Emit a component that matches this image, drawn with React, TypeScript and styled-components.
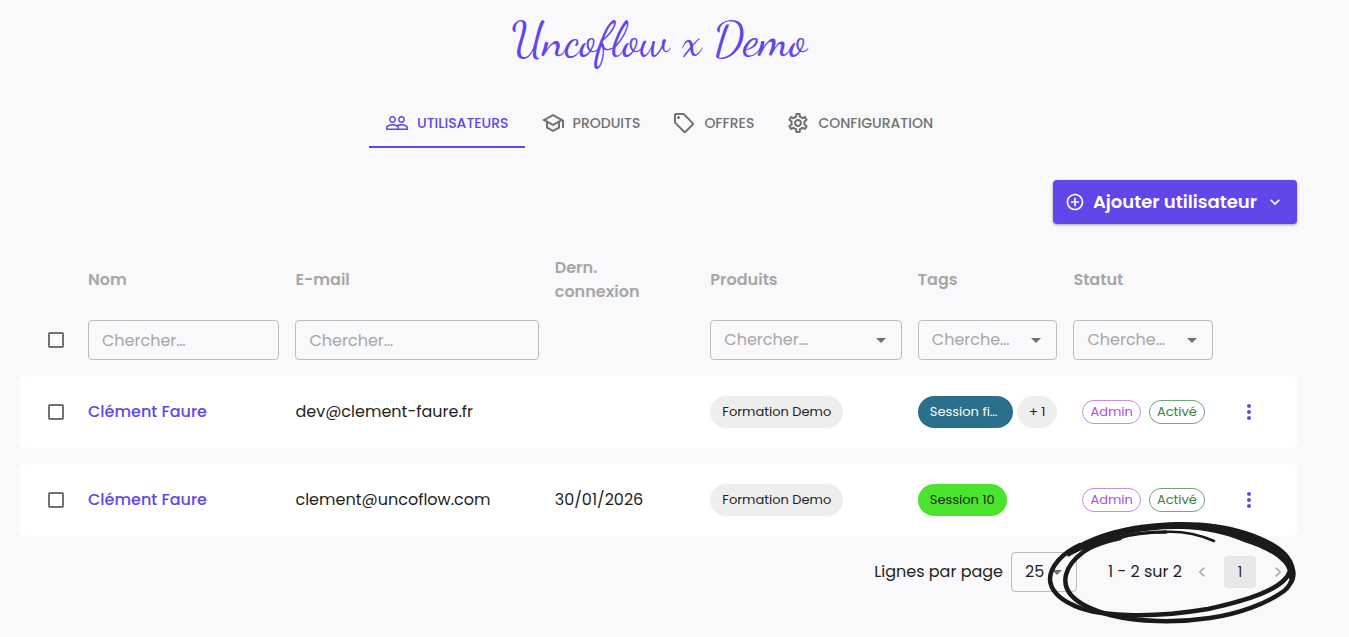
import React from 'react';
import styled, { createGlobalStyle } from 'styled-components';
import {
  MdAddCircleOutline,
  MdArrowDropDown,
  MdChevronLeft,
  MdChevronRight,
  MdKeyboardArrowDown,
  MdMoreVert,
  MdOutlineSchool,
  MdOutlineSell,
  MdOutlineSettings,
  MdPeopleOutline,
} from 'react-icons/md';

const colors = {
  primary: '#6246ea',
  page: '#f9f9fb',
  text: '#1f1f21',
  muted: '#717173',
  faint: '#a6a6a8',
  line: '#bdbdc0',
};

const GlobalStyle = createGlobalStyle`
  *, *::before, *::after { box-sizing: border-box; }
  body {
    margin: 0;
    background: ${colors.page};
    color: ${colors.text};
    font-family: Poppins, Inter, "Liberation Sans", sans-serif;
    font-size: 16px;
    line-height: 24px;
  }
  button, input, select { font: inherit; color: inherit; }
  button { cursor: pointer; }
`;

const Page = styled.main`
  min-height: 100vh;
  padding: 0 51px 24px 20px;
`;

const Brand = styled.h1`
  margin: 0;
  padding: 12px 0 32px;
  text-align: center;
  color: ${colors.primary};
  font-family: "Dancing Script", "Liberation Serif", cursive;
  font-weight: 400;
  font-size: 47px;
  line-height: 56px;
`;

const Tabs = styled.nav`
  display: flex;
  justify-content: center;
`;

const Tab = styled.a<{ $active?: boolean }>`
  display: flex;
  align-items: center;
  gap: 8px;
  height: 48px;
  padding: 0 16px;
  border-bottom: 2px solid ${(p) => (p.$active ? colors.primary : 'transparent')};
  color: ${(p) => (p.$active ? colors.primary : colors.muted)};
  font-size: 14px;
  font-weight: 500;
  text-decoration: none;
  text-transform: uppercase;
`;

const Toolbar = styled.div`
  display: flex;
  justify-content: flex-end;
  padding: 32px 1px 24px 0;
`;

const AddButton = styled.button`
  display: flex;
  align-items: center;
  gap: 8px;
  height: 44px;
  padding: 0 12px;
  border: 0;
  border-radius: 4px;
  background: ${colors.primary};
  color: #fff;
  font-size: 18px;
  font-weight: 600;
  box-shadow: 0 1px 3px rgba(0, 0, 0, 0.35);
`;

const Table = styled.table`
  display: block;
`;

const Head = styled.thead`
  display: block;
`;

const Body = styled.tbody`
  display: flex;
  flex-direction: column;
  gap: 16px;
`;

const Row = styled.tr<{ $card?: boolean; $filters?: boolean }>`
  display: grid;
  grid-template-columns:
    60px minmax(0, 4fr) minmax(0, 5fr) minmax(0, 3fr) minmax(0, 4fr)
    minmax(0, 3fr) minmax(0, 3fr) 77px;
  align-items: center;
  min-height: ${(p) => (p.$card ? '72px' : '64px')};
  padding-bottom: ${(p) => (p.$filters ? '8px' : '0')};
  border-radius: 6px;
  background: ${(p) => (p.$card ? '#fff' : 'transparent')};
`;

const HeadCell = styled.th`
  padding: 0 32px 0 8px;
  text-align: left;
  color: ${colors.faint};
  font-weight: 600;
`;

const Cell = styled.td<{ $wide?: boolean }>`
  display: flex;
  align-items: center;
  gap: ${(p) => (p.$wide ? '8px' : '4px')};
  padding: 0 ${(p) => (p.$wide ? '17px' : '8px')};
  white-space: nowrap;
`;

const CheckCell = styled.td`
  display: flex;
  padding: 0 16px 0 28px;
`;

const Checkbox = styled.input`
  appearance: none;
  width: 16px;
  height: 16px;
  margin: 0;
  border: 2px solid ${colors.muted};
  border-radius: 2px;
  &:checked { background: ${colors.primary}; border-color: ${colors.primary}; }
`;

const SearchInput = styled.input`
  width: 100%;
  height: 40px;
  padding: 0 13px;
  border: 1px solid ${colors.line};
  border-radius: 4px;
  background: transparent;
  &::placeholder { color: ${colors.faint}; opacity: 1; }
`;

const SelectBox = styled.span<{ $compact?: boolean }>`
  display: grid;
  align-items: center;
  width: ${(p) => (p.$compact ? '66px' : '100%')};
  & > * { grid-area: 1 / 1; }
  & > svg {
    justify-self: end;
    margin-right: ${(p) => (p.$compact ? '8px' : '9px')};
    color: ${colors.muted};
    pointer-events: none;
  }
`;

const SelectField = styled.select<{ $filled?: boolean }>`
  appearance: none;
  width: 100%;
  height: 40px;
  padding: 0 28px 0 13px;
  border: 1px solid ${colors.line};
  border-radius: 4px;
  background: transparent;
  color: ${(p) => (p.$filled ? colors.text : colors.faint)};
`;

const UserLink = styled.a`
  color: ${colors.primary};
  font-weight: 500;
  text-decoration: none;
`;

const Chip = styled.span<{ $bg?: string; $fg?: string; $fill?: boolean }>`
  flex: ${(p) => (p.$fill ? '1 1 0' : '0 0 auto')};
  min-width: 40px;
  padding: 0 12px;
  border-radius: 16px;
  background: ${(p) => p.$bg ?? '#eeeeee'};
  color: ${(p) => p.$fg ?? colors.text};
  font-size: 13px;
  line-height: 32px;
`;

const Badge = styled.span<{ $fg: string; $line: string }>`
  padding: 0 7px;
  border: 1px solid ${(p) => p.$line};
  border-radius: 12px;
  color: ${(p) => p.$fg};
  font-size: 13px;
  line-height: 22px;
`;

const IconButton = styled.button<{ $size: number; $fg: string; $current?: boolean }>`
  display: flex;
  align-items: center;
  justify-content: center;
  width: ${(p) => p.$size}px;
  height: ${(p) => p.$size}px;
  padding: 0;
  border: 0;
  border-radius: 4px;
  background: ${(p) => (p.$current ? '#e8e8e8' : 'transparent')};
  color: ${(p) => p.$fg};
  font-size: 14px;
`;

const Footer = styled.footer`
  position: relative;
  display: flex;
  align-items: center;
  justify-content: flex-end;
  gap: 8px;
  padding: 16px 4px 0 0;
`;

const Range = styled.span`
  padding-left: 23px;
`;

const Pager = styled.nav`
  display: flex;
  gap: 6px;
  margin-left: -4px;
`;

const Scribble = styled.svg`
  position: absolute;
  top: -16px;
  right: 0;
  pointer-events: none;
`;

interface Tag { label: string; bg?: string; fg?: string }
interface User { id: number; name: string; email: string; last: string; tags: Tag[] }

const users: User[] = [
  {
    id: 1,
    name: 'Clément Faure',
    email: 'dev@clement-faure.fr',
    last: '',
    tags: [{ label: 'Session fi…', bg: '#2a6f8c', fg: '#fff' }, { label: '+ 1' }],
  },
  {
    id: 2,
    name: 'Clément Faure',
    email: 'clement@uncoflow.com',
    last: '30/01/2026',
    tags: [{ label: 'Session 10', bg: '#4be32d' }],
  },
];

const tabs = [
  { label: 'Utilisateurs', Icon: MdPeopleOutline },
  { label: 'Produits', Icon: MdOutlineSchool },
  { label: 'Offres', Icon: MdOutlineSell },
  { label: 'Configuration', Icon: MdOutlineSettings },
];

const headings = ['', 'Nom', 'E-mail', 'Dern. connexion', 'Produits', 'Tags', 'Statut', ''];

function FilterSelect({ label, text }: { label: string; text: string }) {
  return (
    <SelectBox>
      <SelectField aria-label={label}>
        <option>{text}</option>
      </SelectField>
      <MdArrowDropDown size={24} />
    </SelectBox>
  );
}

export default function App() {
  return (
    <>
      <GlobalStyle />
      <Page>
        <Brand>Uncoflow x Demo</Brand>
        <Tabs>
          {tabs.map(({ label, Icon }, i) => (
            <Tab key={label} href="#" $active={i === 0}>
              <Icon size={24} />
              {label}
            </Tab>
          ))}
        </Tabs>
        <Toolbar>
          <AddButton type="button">
            <MdAddCircleOutline size={20} />
            Ajouter utilisateur
            <MdKeyboardArrowDown size={20} />
          </AddButton>
        </Toolbar>
        <Table>
          <Head>
            <Row>
              {headings.map((h, i) => (
                <HeadCell key={i} scope="col">{h}</HeadCell>
              ))}
            </Row>
            <Row $filters>
              <CheckCell><Checkbox type="checkbox" aria-label="Tout sélectionner" /></CheckCell>
              <Cell><SearchInput aria-label="Nom" placeholder="Chercher…" /></Cell>
              <Cell><SearchInput aria-label="E-mail" placeholder="Chercher…" /></Cell>
              <Cell />
              <Cell><FilterSelect label="Produits" text="Chercher…" /></Cell>
              <Cell><FilterSelect label="Tags" text="Cherche…" /></Cell>
              <Cell><FilterSelect label="Statut" text="Cherche…" /></Cell>
              <Cell />
            </Row>
          </Head>
          <Body>
            {users.map((u) => (
              <Row key={u.id} $card>
                <CheckCell><Checkbox type="checkbox" aria-label={u.name} /></CheckCell>
                <Cell><UserLink href="#">{u.name}</UserLink></Cell>
                <Cell>{u.email}</Cell>
                <Cell>{u.last}</Cell>
                <Cell><Chip>Formation Demo</Chip></Cell>
                <Cell>
                  {u.tags.map((t, i) => (
                    <Chip key={t.label} $bg={t.bg} $fg={t.fg} $fill={i === 0 && u.tags.length > 1}>
                      {t.label}
                    </Chip>
                  ))}
                </Cell>
                <Cell $wide>
                  <Badge $fg="#a94fd8" $line="#c68af0">Admin</Badge>
                  <Badge $fg="#3c7d44" $line="#6fa577">Activé</Badge>
                </Cell>
                <Cell>
                  <IconButton type="button" aria-label="Actions" $size={40} $fg={colors.primary}>
                    <MdMoreVert size={24} />
                  </IconButton>
                </Cell>
              </Row>
            ))}
          </Body>
        </Table>
        <Footer>
          <label htmlFor="page-size">Lignes par page</label>
          <SelectBox $compact>
            <SelectField id="page-size" $filled>
              <option>25</option>
            </SelectField>
            <MdArrowDropDown size={24} />
          </SelectBox>
          <Range>1 - 2 sur 2</Range>
          <Pager>
            <IconButton type="button" aria-label="Page précédente" $size={32} $fg="#acacae">
              <MdChevronLeft size={20} />
            </IconButton>
            <IconButton type="button" $size={32} $fg={colors.text} $current>1</IconButton>
            <IconButton type="button" aria-label="Page suivante" $size={32} $fg="#acacae">
              <MdChevronRight size={20} />
            </IconButton>
          </Pager>
          <Scribble width="252" height="108" viewBox="1046 520 252 108" aria-hidden="true">
            <g fill="none" stroke="#1b1a1b" strokeLinecap="round" strokeLinejoin="round">
              <path
                strokeWidth="4.5"
                d="M1293 574 C1292 582 1288 588 1284 591 C1266 604 1238 614 1210 618 C1176 623 1138 622 1110 615 C1092 610 1078 603 1071 595 C1061 583 1064 567 1082 553 C1092 545 1106 541 1120 538"
              />
              <path strokeWidth="3.5" d="M1118 538 C1131 534 1149 532 1166 532" />
              <path strokeWidth="2.5" d="M1164 532 C1182 531 1200 535 1214 541" />
              <path
                strokeWidth="4.5"
                d="M1080 545 C1062 553 1050 567 1050 579 C1050 590 1060 599 1071 604 C1083 611 1103 614 1127 615 C1152 616 1184 613 1208 609 C1244 601 1284 590 1290 571"
              />
            </g>
            <path
              fill="#1b1a1b"
              d="M1067 556 C1069 551 1074 547 1079 544 C1108 528 1146 522 1183 522 C1206 522 1227 525 1246 531 C1274 540 1292 552 1295 569 Q1297 577 1293 584 L1288 577 C1291 562 1267 549 1244 542 C1226 534 1206 530 1183 529 C1148 528 1118 534 1089 547 C1080 551 1074 553 1070 556 Q1068 557 1067 556 Z"
            />
          </Scribble>
        </Footer>
      </Page>
    </>
  );
}
